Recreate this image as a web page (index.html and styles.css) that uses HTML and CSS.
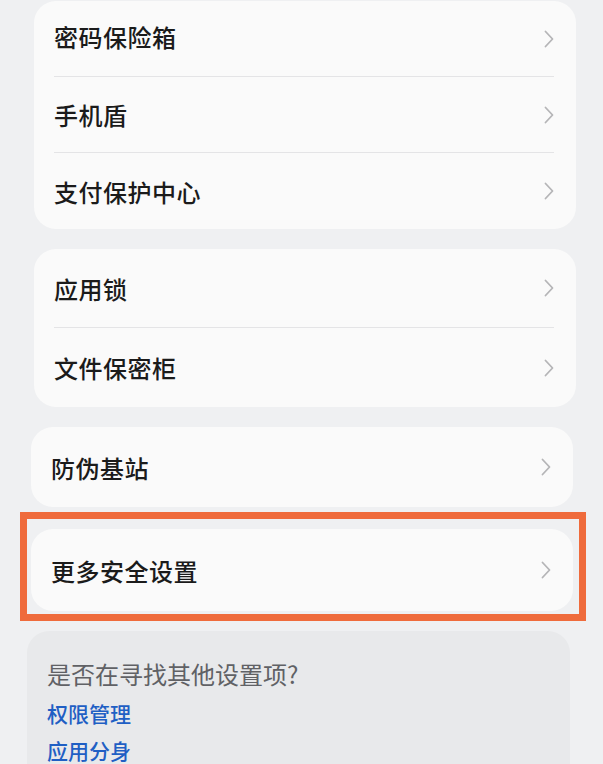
FILE: index.html
```html
<!DOCTYPE html>
<html lang="zh-CN">

<head>
    <meta charset="UTF-8">
    <meta name="viewport" content="width=device-width, initial-scale=1.0">
    <title>安全设置</title>
    <link rel="stylesheet" href="styles.css">
</head>

<body>
    <div class="settings">
        <div class="card card-first">
            <div class="row"><span>密码保险箱</span><svg class="chevron" viewBox="0 0 10 18"><path d="M1.5 1.5 L8.5 9 L1.5 16.5"/></svg></div>
            <div class="row"><span>手机盾</span><svg class="chevron" viewBox="0 0 10 18"><path d="M1.5 1.5 L8.5 9 L1.5 16.5"/></svg></div>
            <div class="row"><span>支付保护中心</span><svg class="chevron" viewBox="0 0 10 18"><path d="M1.5 1.5 L8.5 9 L1.5 16.5"/></svg></div>
        </div>

        <div class="card">
            <div class="row row-tall"><span>应用锁</span><svg class="chevron" viewBox="0 0 10 18"><path d="M1.5 1.5 L8.5 9 L1.5 16.5"/></svg></div>
            <div class="row row-tall"><span>文件保密柜</span><svg class="chevron" viewBox="0 0 10 18"><path d="M1.5 1.5 L8.5 9 L1.5 16.5"/></svg></div>
        </div>

        <div class="card card-shift">
            <div class="row row-single"><span>防伪基站</span><svg class="chevron" viewBox="0 0 10 18"><path d="M1.5 1.5 L8.5 9 L1.5 16.5"/></svg></div>
        </div>

        <!-- highlighted entry with the orange frame -->
        <div class="highlight">
            <div class="card card-shift">
                <div class="row row-single"><span>更多安全设置</span><svg class="chevron" viewBox="0 0 10 18"><path d="M1.5 1.5 L8.5 9 L1.5 16.5"/></svg></div>
            </div>
        </div>

        <div class="card card-hint">
            <p class="hint-title">是否在寻找其他设置项?</p>
            <a class="hint-link" href="#">权限管理</a>
            <a class="hint-link" href="#">应用分身</a>
        </div>
    </div>
</body>

</html>
```

FILE: styles.css
```css
body {
    margin: 0;
    padding: 0;
    background-color: #eff0f2;
    font-family: "Noto Sans CJK SC", "Noto Sans", sans-serif;
    height: 764px;
    overflow: hidden;
}

.settings {
    display: flex;
    flex-direction: column;
    gap: 20px;
    padding: 1px 27px 0 34px;
}

.card {
    background-color: #fafafa;
    border-radius: 22px;
}

.card-shift {
    margin: 0 3px 0 -3px;
}

.row {
    display: flex;
    align-items: center;
    justify-content: space-between;
    height: 76px;
    margin: 0 22px 0 20px;
    border-bottom: 1.5px solid #e4e4e6;
    box-sizing: border-box;
}

.card-first .row:first-child span {
    margin-top: -4px;
}

.row:last-child {
    border-bottom: none;
}

.row span {
    font-size: 24px;
    font-weight: 500;
    color: #1b1b1b;
    letter-spacing: 0.5px;
}

.row-tall {
    height: 79px;
}

.row-single {
    height: 80px;
}

.chevron {
    width: 10px;
    height: 18px;
    fill: none;
    stroke: #b5b5b7;
    stroke-width: 1.8;
    stroke-linecap: round;
    stroke-linejoin: round;
}

.highlight {
    position: relative;
    margin-top: 2px;
}

.highlight .row-single {
    height: 82px;
}

.highlight::after {
    content: "";
    position: absolute;
    top: -17px;
    bottom: -10px;
    left: -14px;
    right: -10px;
    border: 7px solid #ef6b3c;
}

.card-hint {
    background-color: #e8e9eb;
    margin: 0 6px 0 -7px;
    padding: 27px 20px 0 20px;
    height: 200px;
    display: flex;
    flex-direction: column;
}

.hint-title {
    margin: 0;
    font-size: 24px;
    line-height: 32px;
    color: #606165;
}

.hint-link {
    font-size: 21px;
    line-height: 37px;
    font-weight: 500;
    color: #1f5fc4;
    text-decoration: none;
}

.hint-link:first-of-type {
    margin-top: 5px;
}
```
